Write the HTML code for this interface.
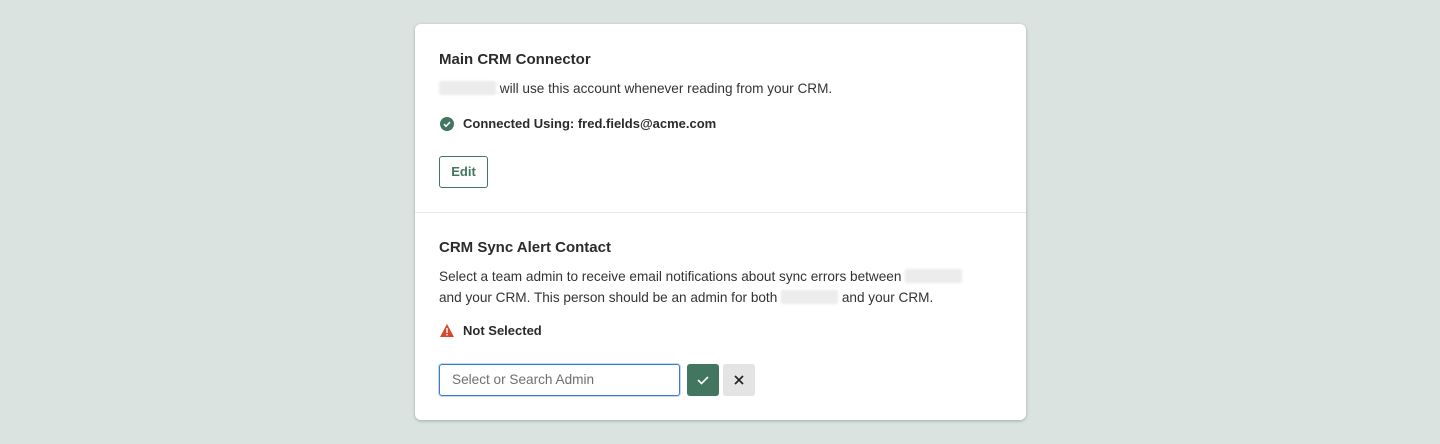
<!DOCTYPE html>
<html><head><meta charset="utf-8"><style>
*{margin:0;padding:0;box-sizing:border-box}
body{width:1440px;height:444px;background:#dae3df;font-family:"Liberation Sans",sans-serif;color:#2d2d2d;position:relative;overflow:hidden}
.card{position:absolute;left:415px;top:24px;width:611px;height:396px;background:#fff;border-radius:6px;box-shadow:0 1px 3px rgba(0,0,0,.25)}
.a{position:absolute;white-space:nowrap}
h2{font-size:15px;font-weight:bold;color:#2b2b2b}
.t{font-size:13.6px;color:#333}
.blur{display:inline-block;background:#ececec;height:14px;vertical-align:-2px;border-radius:2px;filter:blur(1px)}
.b{font-size:13px;font-weight:bold;color:#2b2b2b}
</style></head><body>
<div class="card">
 <h2 class="a" style="left:24px;top:27px">Main CRM Connector</h2>
 <div class="a t" style="left:24px;top:57px"><span class="blur" style="width:57px"></span> will use this account whenever reading from your CRM.</div>
 <svg class="a" style="left:25px;top:93px" width="14" height="14" viewBox="0 0 14 14"><circle cx="7" cy="7" r="7" fill="#437660"/><path d="M4 7.2l2 2 4-4" stroke="#fff" stroke-width="1.6" fill="none"/></svg>
 <div class="a b" style="left:48px;top:92px">Connected Using: fred.fields@acme.com</div>
 <div class="a" style="left:24px;top:132px;width:49px;height:32px;border:1px solid #437660;border-radius:3px;color:#437660;font-size:13px;font-weight:bold;text-align:center;line-height:30px">Edit</div>
 <div class="a" style="left:0;top:188px;width:611px;height:1px;background:#e6e6e6"></div>
 <h2 class="a" style="left:24px;top:215px">CRM Sync Alert Contact</h2>
 <div class="a t" style="left:24px;top:242px;line-height:21px">Select a team admin to receive email notifications about sync errors between <span class="blur" style="width:57px"></span><br>and your CRM. This person should be an admin for both <span class="blur" style="width:57px"></span> and your CRM.</div>
 <svg class="a" style="left:25px;top:300px" width="14" height="13" viewBox="0 0 14 13"><path d="M7 0L14 13H0Z" fill="#d9472b"/><rect x="6.3" y="4" width="1.4" height="5" fill="#fff"/><rect x="6.3" y="10" width="1.4" height="1.4" fill="#fff"/></svg>
 <div class="a b" style="left:48px;top:299px">Not Selected</div>
 <div class="a" style="left:24px;top:340px;width:241px;height:32px;border:1.5px solid #3a7bd5;border-radius:3px;box-shadow:0 0 0 1px #c4d8f5;font-size:13.6px;color:#6f6f6f;padding-left:12px;line-height:29px">Select or Search Admin</div>
 <div class="a" style="left:272px;top:340px;width:32px;height:32px;background:#437660;border-radius:3px"><svg width="32" height="32"><path d="M11 16l3.5 3.5 6.5-6.5" stroke="#fff" stroke-width="1.6" fill="none"/></svg></div>
 <div class="a" style="left:308px;top:340px;width:32px;height:32px;background:#e4e4e4;border-radius:3px"><svg width="32" height="32"><path d="M12 12l8 8M20 12l-8 8" stroke="#222" stroke-width="1.7"/></svg></div>
</div>
</body></html>
